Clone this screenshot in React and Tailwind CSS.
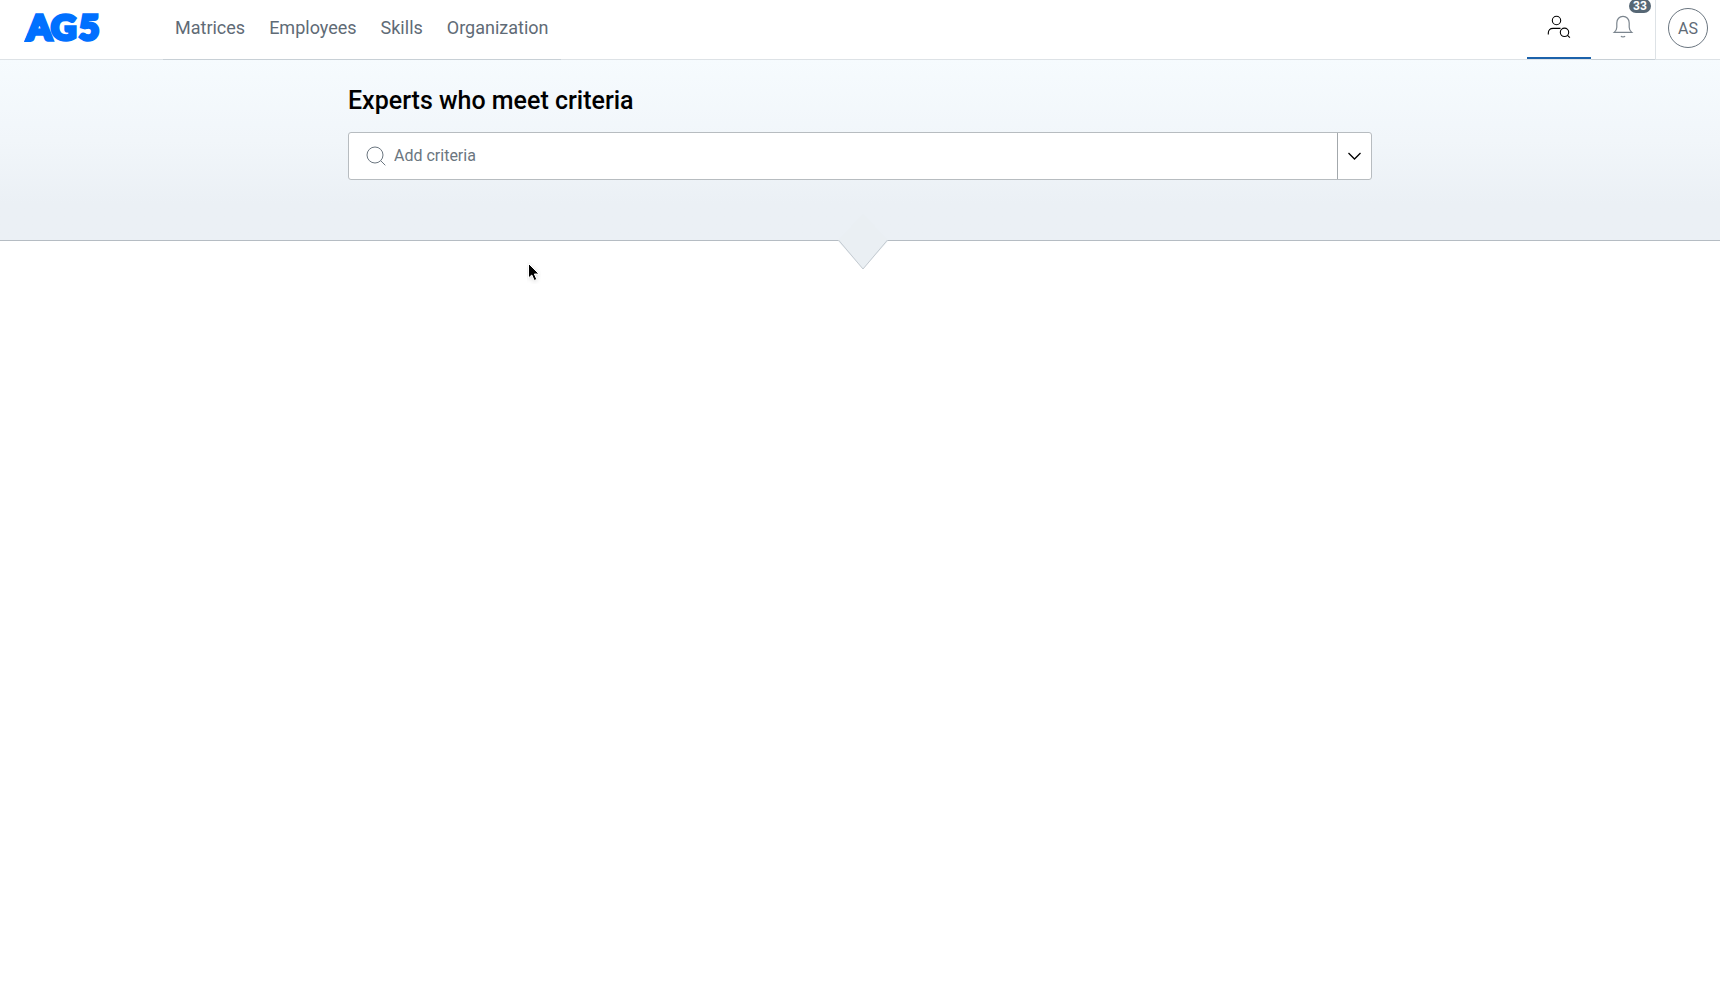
const navItems = ["Matrices", "Employees", "Skills", "Organization"];

function Logo() {
  return (
    <svg width="84" height="48" viewBox="0 0 84 48" role="img" aria-label="AG5">
      <text
        x="3 27 55"
        y="36"
        fill="#0070ff"
        stroke="#0070ff"
        strokeWidth="3.6"
        className="font-['Lato'] text-[35px] font-black"
      >
        AG5
      </text>
      <path d="M0 38L4 29L10 29L7 38Z" fill="#0070ff" />
    </svg>
  );
}

function PersonSearchIcon() {
  return (
    <svg width="24" height="24" viewBox="0 0 24 24" fill="none" stroke="currentColor" strokeWidth="1.1">
      <circle cx="9.5" cy="5.5" r="4.2" />
      <path d="M1.3 19.5V18c0-3 1.8-4.6 4.8-4.6h7.4" />
      <circle cx="17.5" cy="17.3" r="4.2" />
      <path d="M20.5 20.3l2.4 2.4" />
    </svg>
  );
}

function BellIcon() {
  return (
    <svg width="24" height="24" viewBox="0 0 24 24" fill="none" stroke="currentColor" strokeWidth="1.2">
      <path d="M3.2 18.4h17.6c-1.5-1.3-2.6-2.9-2.6-5.2V8.9c0-3.7-2.5-6.5-6.2-6.5S5.8 5.2 5.8 8.9v4.3c0 2.3-1.1 3.9-2.6 5.2z" />
      <path d="M10 22c.6 1.2 3.4 1.2 4 0" />
    </svg>
  );
}

function SearchIcon() {
  return (
    <svg width="20" height="20" viewBox="0 0 20 20" fill="none" stroke="currentColor" className="shrink-0">
      <circle cx="9" cy="9" r="8" />
      <path d="M14.7 14.7l4.6 4.6" />
    </svg>
  );
}

export default function App() {
  return (
    <div className="min-h-screen bg-white font-['Roboto',sans-serif] text-[#5f6b76]">
      <header className="flex h-[60px] border-b border-[#dde2e6]">
        <a href="#home" className="mt-1 ml-6 w-[139px]">
          <Logo />
        </a>
        <nav className="-mb-px flex gap-6 border-b border-[#c8d0d6] px-3 text-lg">
          {navItems.map((item) => (
            <a key={item} href={`#${item.toLowerCase()}`} className="pt-3.5 leading-7">
              {item}
            </a>
          ))}
        </nav>
        <div className="-mb-px ml-auto flex">
          <button
            type="button"
            aria-label="Find experts"
            className="mb-px flex w-16 justify-center border-b-2 border-[#1c62ab] pt-[15px] text-black"
          >
            <PersonSearchIcon />
          </button>
          <button
            type="button"
            aria-label="Notifications"
            className="relative flex w-16 justify-center border-b border-[#c8d0d6] pt-[14px] text-[#7b858e]"
          >
            <BellIcon />
            <span className="absolute -top-px right-1 w-[22px] rounded-full bg-[#566775] text-center text-xs leading-[14px] font-bold text-white">
              33
            </span>
          </button>
          <div className="border-l border-[#dde2e6] px-3 pt-2">
            <button
              type="button"
              className="flex size-10 items-center justify-center rounded-full border border-[#6a757f] pt-0.5"
            >
              AS
            </button>
          </div>
        </div>
      </header>

      <section className="relative border-b border-[#b5bcc3] bg-linear-to-b from-[#f6fbfe] via-[#f1f6fa] via-45% to-[#ebf0f5] to-80% pt-[25px] pb-[60px]">
        <div className="mx-auto max-w-[1024px]">
          <h1 className="text-[25px] leading-8 font-medium text-black">Experts who meet criteria</h1>
          <div className="mt-[15px] flex h-12 rounded-[3px] border border-[#b7bcc0] bg-white">
            <label className="flex grow items-center gap-2 pl-[17px] text-[#6b7680]">
              <SearchIcon />
              <input
                type="text"
                aria-label="Add criteria"
                placeholder="Add criteria"
                className="grow outline-none placeholder:text-[#6b7680]"
              />
            </label>
            <button
              type="button"
              aria-label="Show criteria"
              className="flex w-[34px] items-center justify-center border-l border-[#a3a8ac] text-black"
            >
              <svg width="14" height="8" viewBox="0 0 14 8" fill="none" stroke="currentColor" strokeWidth="1.3">
                <path d="M0.5 1l6 6 6-6" />
              </svg>
            </button>
          </div>
        </div>
        <svg width="50" height="58" viewBox="0 0 50 58" className="absolute -bottom-[31px] left-1/2 -ml-[22px]">
          <path d="M25 1L50 28L25 56L0 28z" fill="#eaeff3" />
          <path d="M0.5 27L25 56L49.5 27" fill="none" stroke="#c3cad0" />
        </svg>
      </section>

      <svg width="14" height="22" viewBox="0 0 14 22" className="absolute top-[262px] left-[527px]" aria-hidden="true">
        <path
          d="M1.5 1.5v14.5l3.3-3 2.4 5.5 2.6-1.1-2.4-5.4h4.6z"
          fill="#000"
          stroke="#fff"
          className="drop-shadow-sm"
        />
      </svg>
    </div>
  );
}
